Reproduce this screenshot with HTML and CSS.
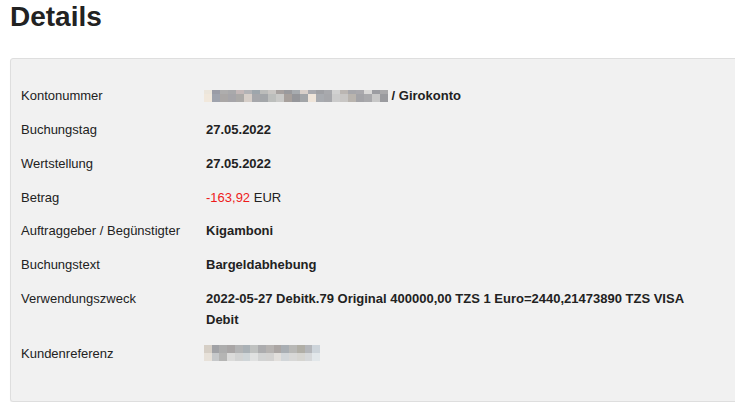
FILE: index.html
```html
<!DOCTYPE html>
<html lang="de">
<head>
<meta charset="utf-8">
<title>Details</title>
<link rel="stylesheet" href="styles.css">
</head>
<body>
<div class="page">
  <h1 class="title">Details</h1>
  <div class="panel">
    <div class="row">
      <div class="label">Kontonummer</div>
      <div class="value strong">
        <span class="blur blur-acct">
          <span class="px-row thin">
            <i style="background:#ece6dc"></i><i style="background:#9a9ca6"></i><i style="background:#aeadad"></i><i style="background:#a9a9ab"></i><i style="background:#c4b8b8"></i><i style="background:#b3b3b6"></i><i style="background:#9ea6ac"></i><i style="background:#bbbcba"></i><i style="background:#c9c6c3"></i><i style="background:#a7a19f"></i><i style="background:#9a9a9d"></i><i style="background:#a7abaf"></i><i style="background:#d8cfc9"></i><i style="background:#a9aaaf"></i><i style="background:#9fa0a4"></i><i style="background:#a8a9ad"></i><i style="background:#d1d1d1"></i><i style="background:#bbb6b2"></i><i style="background:#a7a7ab"></i><i style="background:#aaa9ad"></i><i style="background:#dad9d8"></i><i style="background:#9c9da2"></i><i style="background:#a9a9ab"></i>
          </span>
          <span class="px-row">
            <i style="background:#f1e8dc"></i><i style="background:#9fa3ad"></i><i style="background:#aaa7a6"></i><i style="background:#a6a5a9"></i><i style="background:#aba9a7"></i><i style="background:#d6cec8"></i><i style="background:#a6a7ab"></i><i style="background:#a3a6a9"></i><i style="background:#bcbebc"></i><i style="background:#c9c9c7"></i><i style="background:#a7a09c"></i><i style="background:#95969a"></i><i style="background:#a2a5a8"></i><i style="background:#efe5da"></i><i style="background:#a8abb0"></i><i style="background:#a6a7ab"></i><i style="background:#cbcbcb"></i><i style="background:#c8c6c4"></i><i style="background:#b9b4ae"></i><i style="background:#a3a3a7"></i><i style="background:#a9a9ac"></i><i style="background:#c7c7c7"></i><i style="background:#9a9b9f"></i>
          </span>
        </span> / Girokonto
      </div>
    </div>
    <div class="row">
      <div class="label">Buchungstag</div>
      <div class="value strong">27.05.2022</div>
    </div>
    <div class="row">
      <div class="label">Wertstellung</div>
      <div class="value strong">27.05.2022</div>
    </div>
    <div class="row">
      <div class="label">Betrag</div>
      <div class="value"><span class="neg">-163,92</span> EUR</div>
    </div>
    <div class="row">
      <div class="label">Auftraggeber / Begünstigter</div>
      <div class="value strong">Kigamboni</div>
    </div>
    <div class="row">
      <div class="label">Buchungstext</div>
      <div class="value strong">Bargeldabhebung</div>
    </div>
    <div class="row">
      <div class="label">Verwendungszweck</div>
      <div class="value strong wrap">2022-05-27 Debitk.79 Original 400000,00 TZS 1 Euro=2440,21473890 TZS VISA Debit</div>
    </div>
    <div class="row">
      <div class="label">Kundenreferenz</div>
      <div class="value">
        <span class="blur blur-ref">
          <span class="px-row half">
            <i style="background:#d6cfc6"></i><i style="background:#a1a2a6"></i><i style="background:#adadad"></i><i style="background:#a9a6a6"></i><i style="background:#b3b4b5"></i><i style="background:#aab1b6"></i><i style="background:#bfc1c0"></i><i style="background:#acacae"></i><i style="background:#b6b3b1"></i><i style="background:#aba6a4"></i><i style="background:#a9aeb3"></i><i style="background:#b8b8b6"></i><i style="background:#b0aea6"></i><i style="background:#b4b6ba"></i><i style="background:#cdd4da"></i>
          </span>
          <span class="px-row half">
            <i style="background:#e7e1d9"></i><i style="background:#c6c8ca"></i><i style="background:#b5b5b4"></i><i style="background:#dbdbda"></i><i style="background:#d2d3d3"></i><i style="background:#cfd5d8"></i><i style="background:#e0e1e1"></i><i style="background:#d2d3d3"></i><i style="background:#d3d2d1"></i><i style="background:#e2dfdc"></i><i style="background:#d2d6d9"></i><i style="background:#d8d8d7"></i><i style="background:#d6d5d1"></i><i style="background:#d6d8da"></i><i style="background:#e2e7ea"></i>
          </span>
        </span>
      </div>
    </div>
  </div>
</div>
</body>
</html>
```

FILE: styles.css
```css
html, body {
  margin: 0;
  padding: 0;
  background: #ffffff;
  overflow: hidden;
}

body {
  font-family: "Liberation Sans", Arial, sans-serif;
  font-size: 13px;
  color: #222222;
}

.page {
  padding: 0 0 0 10px;
}

.title {
  margin: 0;
  padding: 0;
  font-size: 28px;
  line-height: 34px;
  font-weight: bold;
  color: #222222;
}

.panel {
  margin-top: 24px;
  margin-right: -30px;
  height: 344px;
  box-sizing: border-box;
  background: #f1f1f1;
  border: 1px solid #dedede;
  border-radius: 3px;
  box-shadow: 0 1px 1px rgba(0, 0, 0, 0.06);
  padding: 20px 0 0 10px;
}

.row {
  display: flex;
  align-items: flex-start;
  padding: 6.2px 0 6.6px;
  line-height: 21px;
}

.label {
  width: 185px;
  flex: 0 0 185px;
  color: #222222;
}

.value {
  flex: 0 1 auto;
  color: #222222;
}

.strong {
  font-weight: bold;
}

.wrap {
  max-width: 495px;
}

.neg {
  color: #ee1b1b;
}

.blur {
  display: inline-flex;
  flex-direction: column;
  vertical-align: middle;
  position: relative;
  top: -1px;
}

.blur-acct {
  width: 184px;
  margin-left: -2px;
}

.blur-ref {
  width: 116px;
  margin-left: -2px;
}

.px-row {
  display: flex;
  height: 8px;
}

.px-row.thin {
  height: 4px;
}

.px-row.half {
  height: 8px;
}

.px-row i {
  flex: 1 1 0;
  display: block;
}
```
